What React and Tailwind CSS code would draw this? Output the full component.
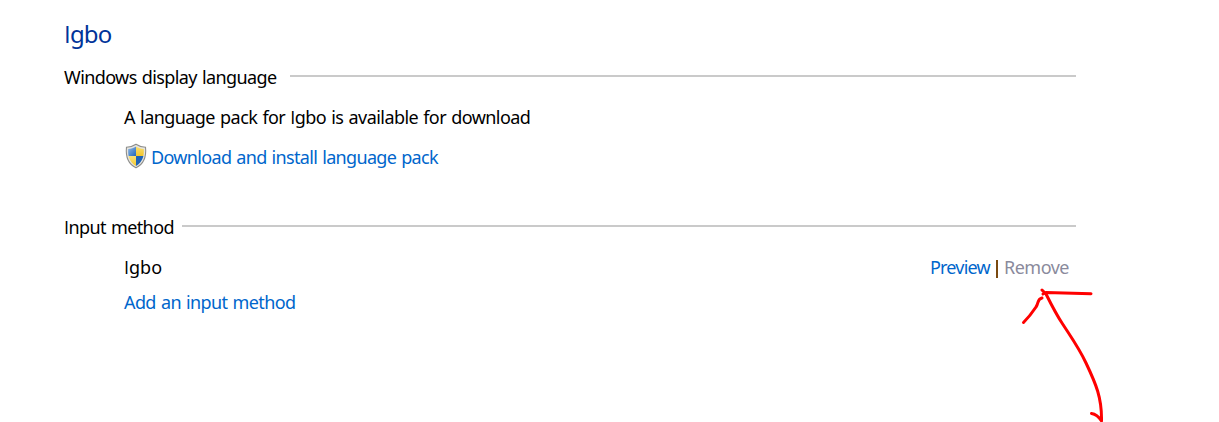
function ShieldIcon() {
  return (
    <svg width="24" height="26" viewBox="0 0 22 24" className="shrink-0 -mt-[2px]">
      <defs>
        <clipPath id="shield">
          <path d="M11 3.2C8.8 4.7 6.6 5.4 3.8 5.6C3.4 12.5 5 17.7 11 21.2C17 17.7 18.6 12.5 18.2 5.6C15.4 5.4 13.2 4.7 11 3.2Z" />
        </clipPath>
        <linearGradient id="blue" x1="0" y1="0" x2="1" y2="1">
          <stop offset="0" stopColor="#a9c9ea" />
          <stop offset="1" stopColor="#2168bd" />
        </linearGradient>
        <linearGradient id="yellow" x1="0" y1="0" x2="0" y2="1">
          <stop offset="0" stopColor="#f9e27a" />
          <stop offset="1" stopColor="#f3c62c" />
        </linearGradient>
      </defs>
      <path
        d="M11 1.2C8.4 3 5.4 3.8 2.2 3.9C1.3 13 3.6 19.3 11 22.9C18.4 19.3 20.7 13 19.8 3.9C16.6 3.8 13.6 3 11 1.2Z"
        fill="#e4e4e1"
        stroke="#8d8d8a"
        strokeWidth="1"
      />
      <g clipPath="url(#shield)">
        <rect x="2" y="2" width="9" height="10" fill="url(#blue)" />
        <rect x="11" y="2" width="9" height="10" fill="url(#yellow)" />
        <rect x="2" y="12" width="9" height="10" fill="url(#yellow)" />
        <rect x="11" y="12" width="9" height="10" fill="#1f63b5" />
      </g>
    </svg>
  );
}

// Noto Sans draws a capital I with serifs, Open Sans draws a plain bar
function PlainI() {
  return <span className="font-['Open_Sans']">I</span>;
}

function SectionHeading({ children, className }) {
  return (
    <div className="flex items-center h-[46px]">
      <h2 className={className}>{children}</h2>
      <div className="flex-1 h-[2px] -mt-[2px] bg-[#cacaca]" />
    </div>
  );
}

export default function App() {
  return (
    <div
      className="relative w-[1219px] h-[422px] overflow-hidden bg-white text-black text-[18px] whitespace-nowrap"
      style={{ fontFamily: '"Noto Sans", "Open Sans", sans-serif' }}
    >
      <main className="pt-[14px] pl-[64px] w-[1076px]">
        <h1 className="h-10 leading-10 text-[24px] text-[#003399] tracking-[-0.8px]">
          <PlainI />gbo
        </h1>

        {/* Display language */}
        <SectionHeading className="w-[226px] tracking-[-0.6px] [word-spacing:1px]">
          Windows display language
        </SectionHeading>
        <div className="pl-[60px]">
          <p className="h-[34px] leading-[34px] tracking-[-0.56px] [word-spacing:1px]">
            A language pack for <PlainI />gbo is available for download
          </p>
          <div className="flex items-center h-[46px] text-[#0066cc]">
            <ShieldIcon />
            <a className="ml-[3px] tracking-[-0.67px] [word-spacing:1px]">Download and install language pack</a>
          </div>
        </div>

        {/* Input method */}
        <div className="mt-6">
          <SectionHeading className="w-[118px] tracking-[-0.6px] [word-spacing:1px]">
            <PlainI />nput method
          </SectionHeading>
          <div className="pl-[60px]">
            <div className="flex items-center justify-between h-[34px]">
              <span className="tracking-[0px]">
                <PlainI />gbo
              </span>
              <div className="flex items-center pr-[7px]">
                <a className="w-[66px] text-[#0066cc] tracking-[-0.8px]">Preview</a>
                <span className="w-[2px] h-[18px] mt-[3px] bg-[#7a4a10] mr-[6px]" />
                <a className="w-[65px] text-[#8a8a9c] tracking-[-0.5px]">Remove</a>
              </div>
            </div>
            <p className="h-9 leading-9 text-[#0066cc] tracking-[-0.6px] [word-spacing:1px]">Add an input method</p>
          </div>
        </div>
      </main>

      {/* Hand-drawn arrow */}
      <svg
        className="absolute left-[1010px] top-[280px]"
        width="110"
        height="142"
        viewBox="0 0 110 142"
        fill="none"
        stroke="#ff0000"
        strokeWidth="3"
        strokeLinecap="round"
        strokeLinejoin="round"
      >
        <path d="M32 10L36 14C41 24 46 34 52 43C61 57 69 68 76 83C86 104 92 118 91.5 141C89 137 86 134 81.5 133.5" />
        <path d="M33 14L36 12.5L81 13.7" />
        <path d="M32 18C27 19 29 23 26 27C22 33 18 38 13.5 42.5" />
      </svg>
    </div>
  );
}
